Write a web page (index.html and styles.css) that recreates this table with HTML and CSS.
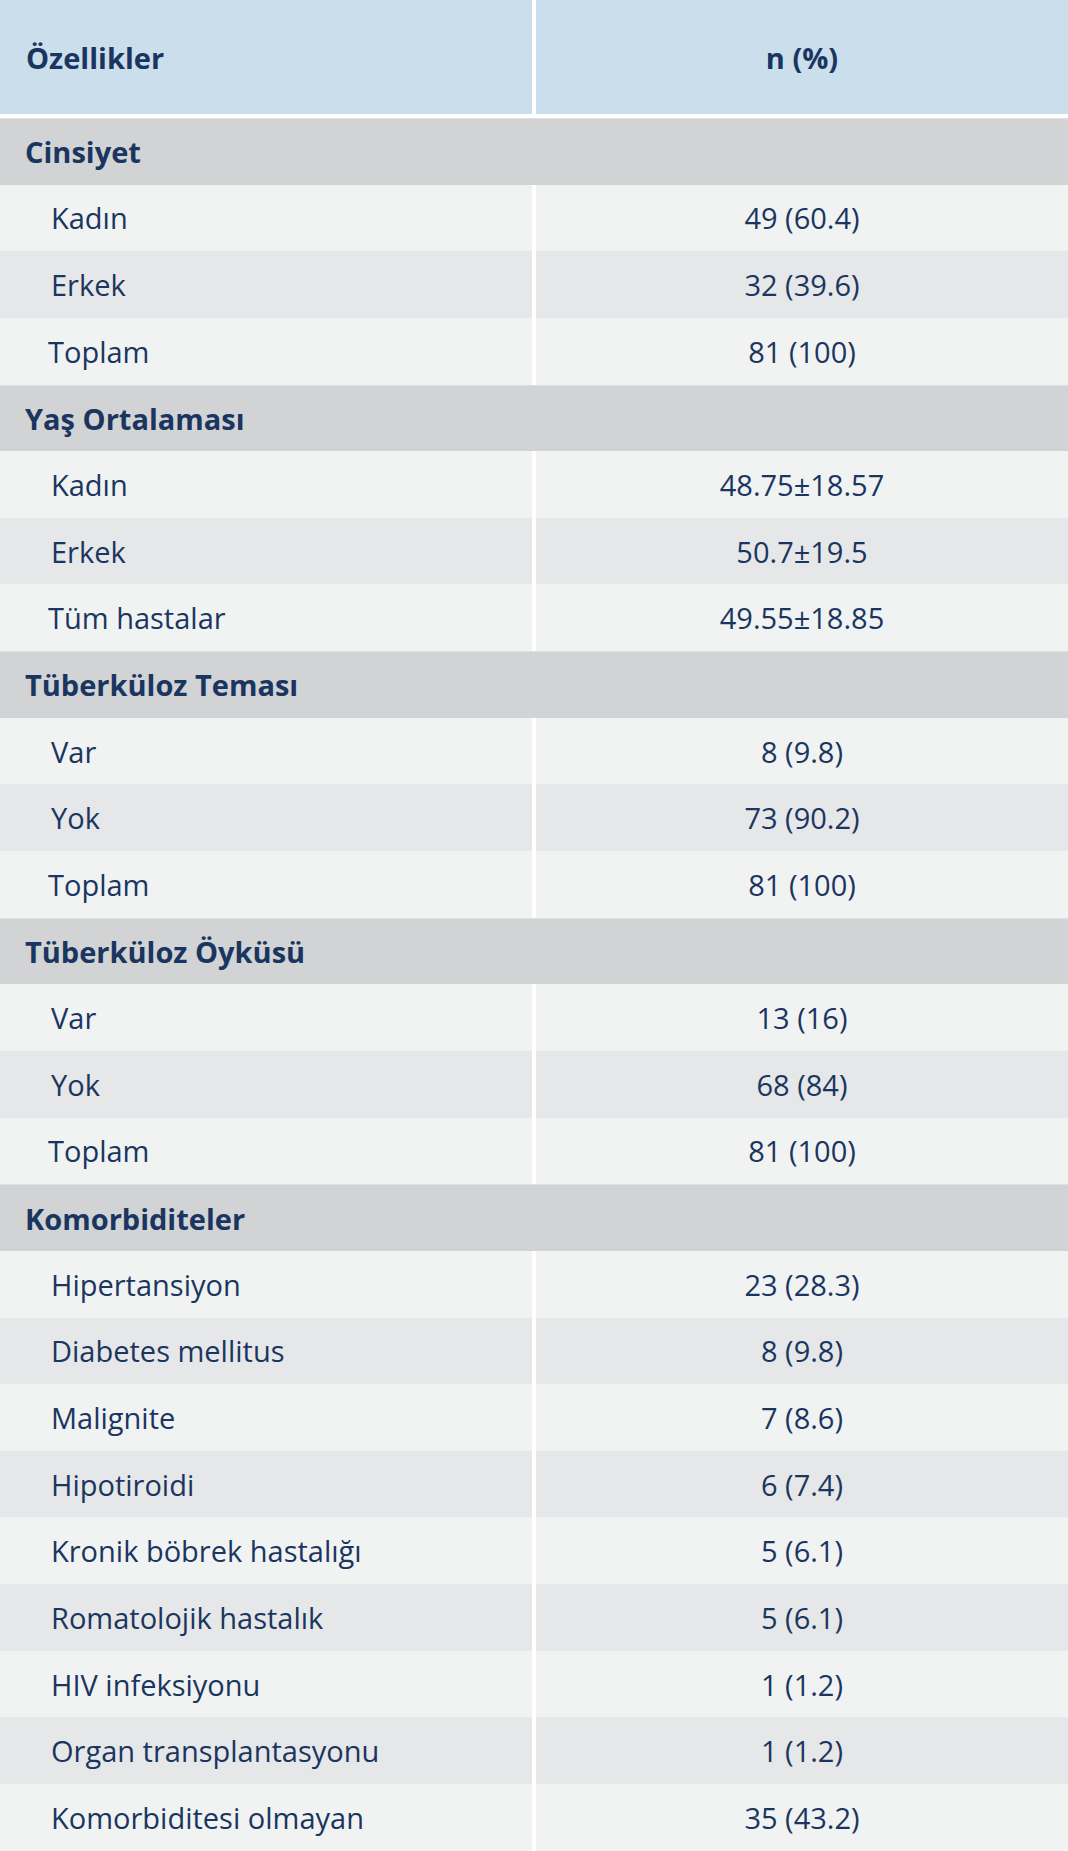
FILE: index.html
```html
<!DOCTYPE html>
<html lang="tr">
<head>
<meta charset="utf-8">
<title>Özellikler</title>
<link rel="stylesheet" href="styles.css">
</head>
<body>
<div class="table">
  <div class="head">Özellikler</div>
  <div class="head center">n (%)</div>

  <div class="section">Cinsiyet</div>
  <div class="cell a">Kadın</div><div class="cell a center">49 (60.4)</div>
  <div class="cell b">Erkek</div><div class="cell b center">32 (39.6)</div>
  <div class="cell a total">Toplam</div><div class="cell a center">81 (100)</div>

  <div class="section">Yaş Ortalaması</div>
  <div class="cell a">Kadın</div><div class="cell a center">48.75±18.57</div>
  <div class="cell b">Erkek</div><div class="cell b center">50.7±19.5</div>
  <div class="cell a total">Tüm hastalar</div><div class="cell a center">49.55±18.85</div>

  <div class="section">Tüberküloz Teması</div>
  <div class="cell a">Var</div><div class="cell a center">8 (9.8)</div>
  <div class="cell b">Yok</div><div class="cell b center">73 (90.2)</div>
  <div class="cell a total">Toplam</div><div class="cell a center">81 (100)</div>

  <div class="section">Tüberküloz Öyküsü</div>
  <div class="cell a">Var</div><div class="cell a center">13 (16)</div>
  <div class="cell b">Yok</div><div class="cell b center">68 (84)</div>
  <div class="cell a total">Toplam</div><div class="cell a center">81 (100)</div>

  <div class="section">Komorbiditeler</div>
  <div class="cell a">Hipertansiyon</div><div class="cell a center">23 (28.3)</div>
  <div class="cell b">Diabetes mellitus</div><div class="cell b center">8 (9.8)</div>
  <div class="cell a">Malignite</div><div class="cell a center">7 (8.6)</div>
  <div class="cell b">Hipotiroidi</div><div class="cell b center">6 (7.4)</div>
  <div class="cell a">Kronik böbrek hastalığı</div><div class="cell a center">5 (6.1)</div>
  <div class="cell b">Romatolojik hastalık</div><div class="cell b center">5 (6.1)</div>
  <div class="cell a">HIV infeksiyonu</div><div class="cell a center">1 (1.2)</div>
  <div class="cell b">Organ transplantasyonu</div><div class="cell b center">1 (1.2)</div>
  <div class="cell a">Komorbiditesi olmayan</div><div class="cell a center">35 (43.2)</div>
</div>
</body>
</html>
```

FILE: styles.css
```css
html, body {
  margin: 0;
  padding: 0;
  background: #ffffff;
}

body {
  font-family: "Open Sans", "Noto Sans", sans-serif;
  font-size: 29px;
  color: #1a3660;
}

.table {
  display: grid;
  grid-template-columns: 532px 1fr;
  grid-template-rows: 118px;
  grid-auto-rows: 66.654px;
  column-gap: 4px;
  width: 1068px;
}

.head {
  border-bottom: 4px solid #ffffff;
  background: #cbdeec;
  font-weight: 700;
  display: flex;
  align-items: center;
  padding-left: 26px;
}

.section {
  grid-column: 1 / -1;
  background: #d1d3d4;
  border-top: 1px solid #dfe0e1;
  font-weight: 700;
  display: flex;
  align-items: center;
  padding-left: 25px;
}

.cell {
  display: flex;
  align-items: center;
  padding-left: 51px;
}

.cell.total {
  padding-left: 48px;
}

.center,
.head.center {
  justify-content: center;
  padding-left: 0;
}

.a {
  background: #f1f2f2;
}

.b {
  background: #e6e7e8;
}
```
